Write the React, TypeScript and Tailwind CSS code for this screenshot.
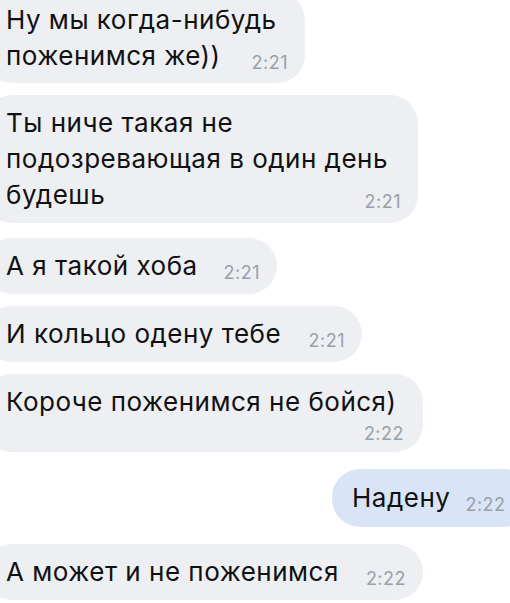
import React from "react";

type Msg = {
  lines: string[];
  time: string;
  width: string;
  mine?: boolean;
  timeBelow?: boolean;
  className?: string;
};

const messages: Msg[] = [
  { lines: ["Ну мы когда-нибудь", "поженимся же))"], time: "2:21", width: "w-[321px]", className: "mt-[-8px] pb-[9px]" },
  { lines: ["Ты ниче такая не", "подозревающая в один день", "будешь"], time: "2:21", width: "w-[434px]", className: "mt-[12px]" },
  { lines: ["А я такой хоба"], time: "2:21", width: "w-[293px]", className: "mt-[15px]" },
  { lines: ["И кольцо одену тебе"], time: "2:21", width: "w-[378px]", className: "mt-[12px]" },
  { lines: ["Короче поженимся не бойся)"], time: "2:22", width: "w-[439px]", timeBelow: true, className: "mt-[12px] pb-[8px]" },
  { lines: ["Надену"], time: "2:22", width: "w-[200px]", mine: true, className: "mt-[17px] py-[11px]" },
  { lines: ["А может и не поженимся"], time: "2:22", width: "w-[439px]", className: "mt-[17px]" },
];

const Time = ({ t, low }: { t: string; low?: boolean }) => (
  <span className={`shrink-0 text-[18px] leading-none text-[#9aa0a8] ${low ? "relative top-[4px]" : ""}`}>{t}</span>
);

const Bubble = ({ m }: { m: Msg }) => {
  const last = m.lines[m.lines.length - 1];
  const rest = m.lines.slice(0, -1);
  return (
    <div
      className={`${m.width} ${m.className ?? ""} ${
        m.mine ? "ml-[332px] bg-[#d9e5f6] pl-[20px]" : "-ml-[16px] bg-[#edeff2] pl-[22px] pr-[17px]"
      } rounded-[28px] py-[10px] text-[26px] tracking-[0.5px] leading-[36px] text-[#111] shrink-0`}
    >
      {rest.map((l) => (
        <div key={l} className="whitespace-nowrap">{l}</div>
      ))}
      {m.timeBelow ? (
        <>
          <div className="whitespace-nowrap">{last}</div>
          <div className="flex h-[24px] items-center justify-end pt-[3px] pr-[2px]">
            <Time t={m.time} />
          </div>
        </>
      ) : (
        <div className={`flex items-baseline ${m.mine ? "gap-[15px]" : "justify-between gap-[20px]"}`}>
          <span className="whitespace-nowrap">{last}</span>
          <Time t={m.time} low />
        </div>
      )}
    </div>
  );
};

export default function App() {
  return (
    <div
      className="w-[510px] h-[603px] overflow-hidden bg-white flex flex-col items-start"
      style={{ fontFamily: 'Inter, "Liberation Sans", Arial, sans-serif' }}
    >
      {messages.map((m, i) => (
        <Bubble key={i} m={m} />
      ))}
    </div>
  );
}
